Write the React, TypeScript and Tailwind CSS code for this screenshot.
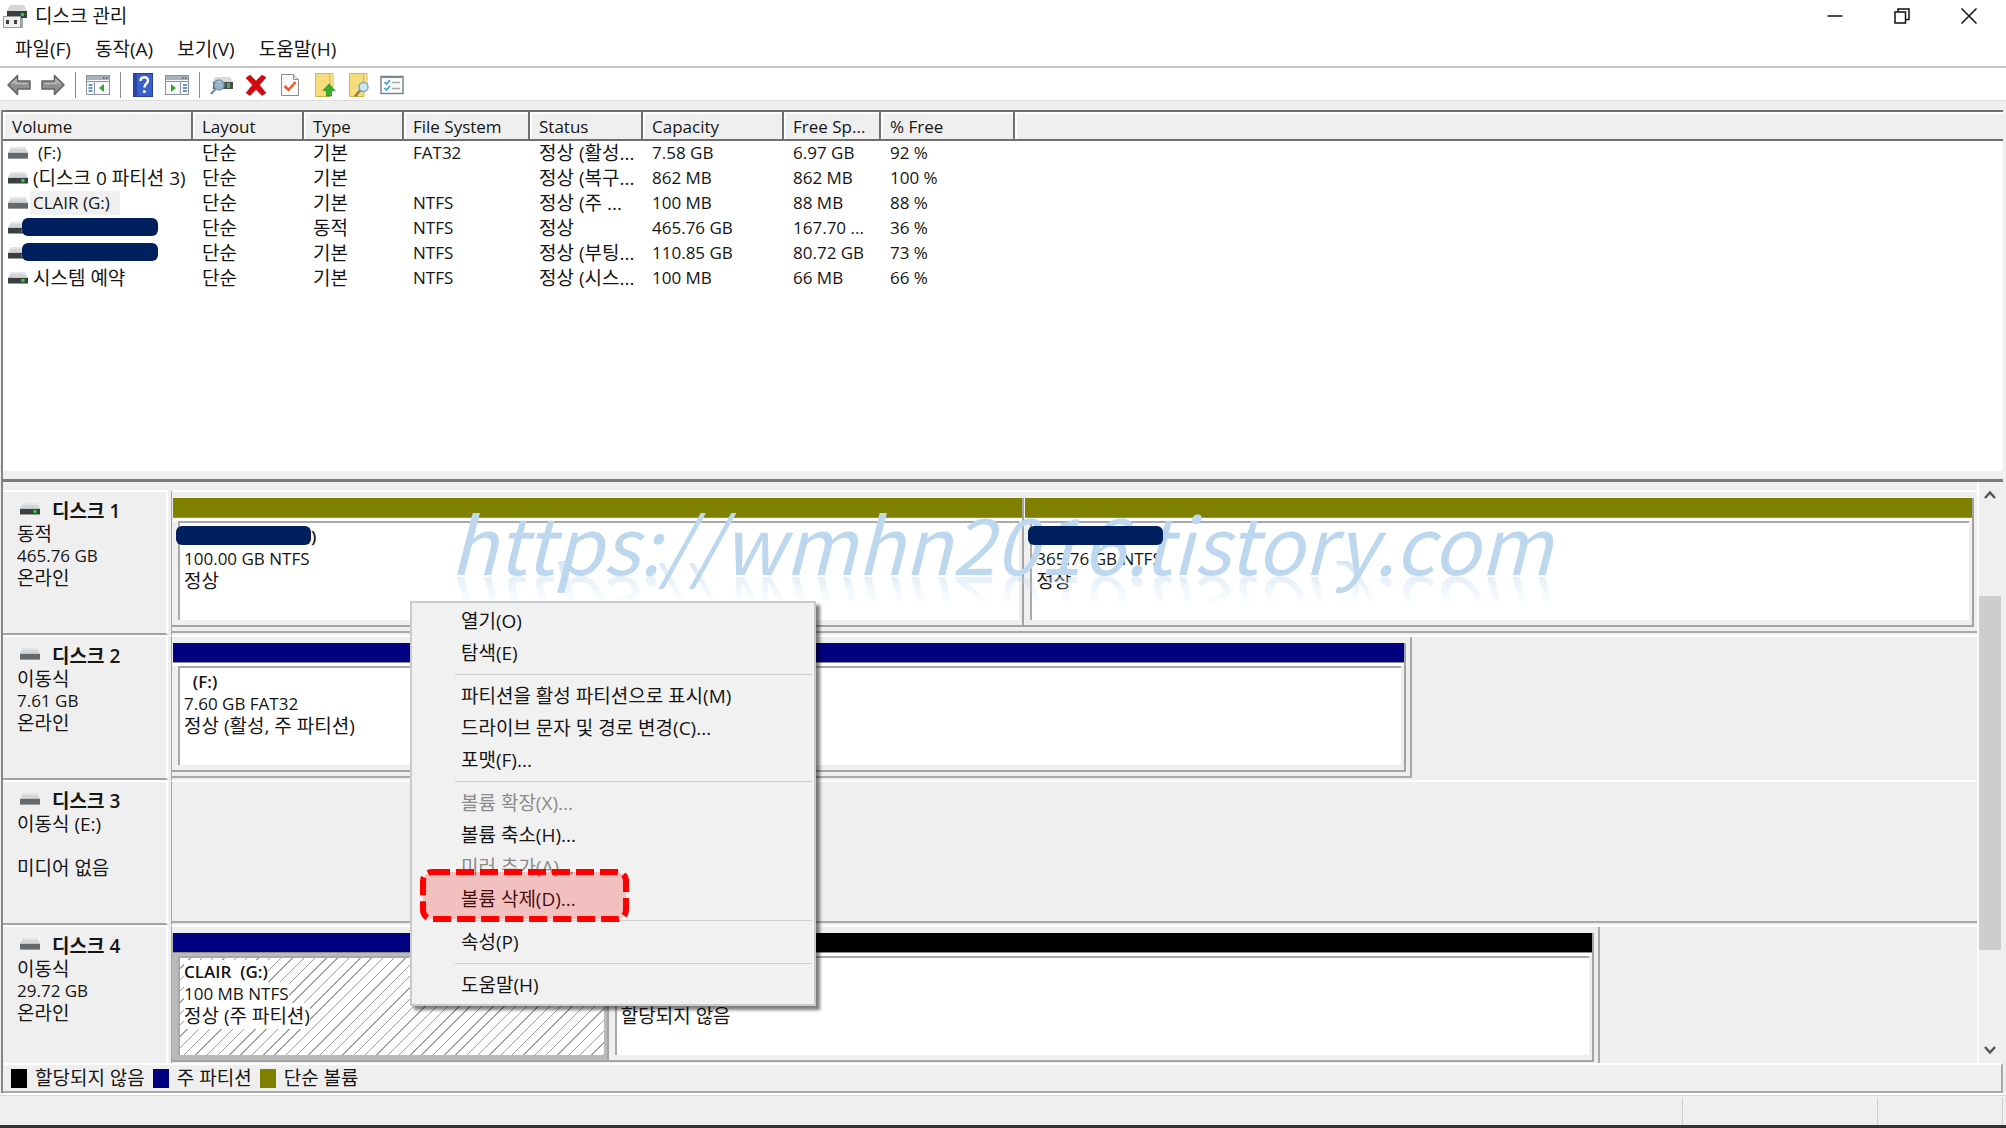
import type { ReactNode } from "react";

type Volume = {
  name?: string;
  masked?: boolean;
  size?: string;
  status: string;
  bar: string;
  grow: number;
  selected?: boolean;
};

type Disk = {
  name: string;
  online?: boolean;
  lines: string[];
  width: string;
  volumes: Volume[];
};

const menus = ["파일(F)", "동작(A)", "보기(V)", "도움말(H)"];

const columns = [
  { title: "Volume", width: "w-[189px]" },
  { title: "Layout", width: "w-[111px]" },
  { title: "Type", width: "w-[100px]" },
  { title: "File System", width: "w-[126px]" },
  { title: "Status", width: "w-[113px]" },
  { title: "Capacity", width: "w-[141px]" },
  { title: "Free Sp...", width: "w-[97px]" },
  { title: "% Free", width: "w-[134px]" },
];

const volumes = [
  { name: "(F:)", indent: true, cells: ["단순", "기본", "FAT32", "정상 (활성...", "7.58 GB", "6.97 GB", "92 %"] },
  { name: "(디스크 0 파티션 3)", online: true, cells: ["단순", "기본", "", "정상 (복구...", "862 MB", "862 MB", "100 %"] },
  { name: "CLAIR (G:)", selected: true, cells: ["단순", "기본", "NTFS", "정상 (주 ...", "100 MB", "88 MB", "88 %"] },
  { name: "", online: true, cells: ["단순", "동적", "NTFS", "정상", "465.76 GB", "167.70 ...", "36 %"] },
  { name: "", online: true, cells: ["단순", "기본", "NTFS", "정상 (부팅...", "110.85 GB", "80.72 GB", "73 %"] },
  { name: "시스템 예약", online: true, cells: ["단순", "기본", "NTFS", "정상 (시스...", "100 MB", "66 MB", "66 %"] },
];

const disks: Disk[] = [
  {
    name: "디스크 1",
    online: true,
    lines: ["동적", "465.76 GB", "온라인"],
    width: "100%",
    volumes: [
      { name: ")", masked: true, size: "100.00 GB NTFS", status: "정상", bar: "bg-[#808000]", grow: 853 },
      { masked: true, size: "365.76 GB NTFS", status: "정상", bar: "bg-[#808000]", grow: 951 },
    ],
  },
  {
    name: "디스크 2",
    lines: ["이동식", "7.61 GB", "온라인"],
    width: "68.7%",
    volumes: [{ name: "  (F:)", size: "7.60 GB FAT32", status: "정상 (활성, 주 파티션)", bar: "bg-[#000080]", grow: 1 }],
  },
  { name: "디스크 3", lines: ["이동식 (E:)", "", "미디어 없음"], width: "100%", volumes: [] },
  {
    name: "디스크 4",
    lines: ["이동식", "29.72 GB", "온라인"],
    width: "79.1%",
    volumes: [
      { name: "CLAIR  (G:)", size: "100 MB NTFS", status: "정상 (주 파티션)", bar: "bg-[#000080]", grow: 436, selected: true },
      { status: "할당되지 않음", bar: "bg-black", grow: 987 },
    ],
  },
];

const contextMenu = [
  [{ label: "열기(O)" }, { label: "탐색(E)" }],
  [{ label: "파티션을 활성 파티션으로 표시(M)" }, { label: "드라이브 문자 및 경로 변경(C)..." }, { label: "포맷(F)..." }],
  [
    { label: "볼륨 확장(X)...", disabled: true },
    { label: "볼륨 축소(H)..." },
    { label: "미러 추가(A)...", disabled: true },
    { label: "볼륨 삭제(D)...", marked: true },
  ],
  [{ label: "속성(P)" }],
  [{ label: "도움말(H)" }],
];

const legend = [
  { label: "할당되지 않음", color: "bg-black" },
  { label: "주 파티션", color: "bg-[#000080]" },
  { label: "단순 볼륨", color: "bg-[#808000]" },
];

// Latin glyphs run wide next to Hangul, so Latin-only strings are set smaller
const textSize = (text: string) => (/[가-힣]/.test(text) ? "text-[19px]" : "text-[17px]");

function DriveIcon({ online }: { online?: boolean }) {
  return (
    <svg width="20" height="12" viewBox="0 0 20 12" className="shrink-0" aria-hidden="true">
      <path d="M3 0h14l3 6H0z" fill="#d3d5d7" />
      <path d="M3 0h14l1 2H2z" fill="#e4e5e6" />
      <rect y="5" width="20" height="1" fill="#c3c5c7" />
      <rect y="6" width="20" height="6" fill={online ? "#3c3f42" : "#66696b"} />
      <rect y="11" width="20" height="1" fill="#9a9c9e" />
      {online && <circle cx="15" cy="8.5" r="1.8" fill="#2fd33a" />}
    </svg>
  );
}

function AppIcon() {
  return (
    <svg width="24" height="24" viewBox="0 0 24 24" aria-hidden="true">
      <path d="M7 1h14l3 6H4z" fill="#d5d7d8" />
      <rect x="4" y="7" width="20" height="7" fill="#3b3e41" />
      <circle cx="19.5" cy="10.5" r="1.8" fill="#2fd33a" />
      <rect x="17" y="14" width="3" height="10" fill="#a7aaac" />
      <rect x="0.5" y="12.5" width="17" height="11" fill="#efefef" stroke="#9b9b9b" />
      <rect x="3" y="16" width="3" height="4" fill="#3f3f3f" />
      <rect x="11" y="16" width="3" height="4" fill="#3f3f3f" />
    </svg>
  );
}

function ArrowIcon({ flip }: { flip?: boolean }) {
  return (
    <svg width="24" height="24" viewBox="0 0 24 24" aria-hidden="true">
      <path
        d={flip ? "M23 12 13.5 2.5v5.5H1v8h12.5v5.5z" : "M1 12 10.5 2.5v5.5H23v8H10.5v5.5z"}
        fill="#8f8f8f"
        stroke="#636363"
        strokeWidth="1.5"
        strokeLinejoin="round"
      />
      <path d={flip ? "M3 10.5h12V7l4 4" : "M21 10.5H9V7l-4 4"} fill="none" stroke="#b9b9b9" strokeWidth="1.5" />
    </svg>
  );
}

function PaneIcon({ right }: { right?: boolean }) {
  return (
    <svg width="24" height="24" viewBox="0 0 24 24" aria-hidden="true">
      <rect x="0.5" y="2.5" width="23" height="19" fill="#f7f8f9" stroke="#8b949e" />
      <rect x="1" y="3" width="22" height="4" fill="#a9b1ba" />
      <path d="M17 5h1.5M20 5h1.5" stroke="#4c5560" strokeWidth="1.5" />
      <path d="M1 8.5h22" stroke="#8b949e" />
      <path d={right ? "M15.5 9v12" : "M8.5 9v12"} stroke="#8b949e" />
      <path d={right ? "M18 12h4M18 15h4M18 18h4" : "M2.5 12h4M2.5 15h4M2.5 18h4"} stroke="#3c78b4" strokeWidth="1.5" />
      <path d={right ? "M6 11l5 4-5 4z" : "M18 11l-5 4 5 4z"} fill="#35a52b" />
    </svg>
  );
}

function HelpIcon() {
  return (
    <svg width="24" height="24" viewBox="0 0 24 24" aria-hidden="true">
      <rect x="2.5" y="0.5" width="19" height="23" fill="#3a5fc8" stroke="#24409c" />
      <rect x="3" y="1" width="3" height="22" fill="#2746a8" />
      <path d="M9.5 8c0-5 7.5-5 7.5-.5 0 3-3.6 3.2-3.6 7" fill="none" stroke="#fff" strokeWidth="2.4" />
      <circle cx="13.4" cy="18.5" r="1.6" fill="#fff" />
    </svg>
  );
}

function DriveSearchIcon() {
  return (
    <svg width="24" height="24" viewBox="0 0 24 24" aria-hidden="true">
      <path d="M5 4h15l3 5H2z" fill="#d8dadb" />
      <rect x="3" y="9" width="20" height="7" fill="#4a4e51" />
      <rect x="17" y="10" width="3" height="5" fill="#2fc53a" />
      <circle cx="9" cy="12" r="5" fill="#a9cbe0" fillOpacity="0.85" stroke="#7796a8" strokeWidth="1.5" />
      <path d="M5.5 16 1 21" stroke="#7796a8" strokeWidth="2.5" />
    </svg>
  );
}

function DeleteIcon() {
  return (
    <svg width="24" height="24" viewBox="0 0 24 24" aria-hidden="true">
      <path d="M2 5 6 2l6 6 6-6 4 2.5-6.5 7.500L22 20l-4 2.500-6-6-6 6L2 20l6.500-8z" fill="#d4080f" stroke="#a9070c" strokeWidth="0.5" />
    </svg>
  );
}

function PropertiesIcon() {
  return (
    <svg width="24" height="24" viewBox="0 0 24 24" aria-hidden="true">
      <path d="M3.5 1.5h12l5 5v16h-17z" fill="#fafafa" stroke="#8c8c8c" />
      <path d="M15.5 1.5v5h5" fill="#e4e4e4" stroke="#8c8c8c" />
      <path d="m6.5 13 4 4 7-8" fill="none" stroke="#ea5a2a" strokeWidth="2.5" />
    </svg>
  );
}

function NoteIcon({ search }: { search?: boolean }) {
  return (
    <svg width="24" height="24" viewBox="0 0 24 24" aria-hidden="true">
      <path d="M3.5.5H18v23H3.5z" fill="#f7dc7c" stroke="#d9b64b" />
      <path d="M18 .5h3v13h-3z" fill="#fbe9a6" stroke="#d9b64b" />
      {search ? (
        <>
          <circle cx="17.5" cy="14" r="4.5" fill="#cfe6f4" stroke="#7fa6bd" strokeWidth="1.5" />
          <path d="m14 17.5-5 6" stroke="#8a8053" strokeWidth="2.5" />
        </>
      ) : (
        <path d="m17 11 6 6.5h-3.5V23h-5v-5.500H11z" fill="#35b22d" stroke="#24871f" strokeWidth="0.7" />
      )}
    </svg>
  );
}

function ChecklistIcon() {
  return (
    <svg width="24" height="24" viewBox="0 0 24 24" aria-hidden="true">
      <rect x="1" y="3.5" width="22" height="17" fill="#fbfbfb" stroke="#7d8791" strokeWidth="1.5" />
      <path d="M1 4h22" stroke="#7d8791" strokeWidth="2" />
      <path d="m4.5 9 2 2 3.500-4M4.500 15l2 2 3.500-4" fill="none" stroke="#3f9be0" strokeWidth="1.7" />
      <path d="M12 9.500h8M12 15.500h8" stroke="#a3a9af" strokeWidth="1.5" />
    </svg>
  );
}

const toolbar: { label: string; icon: ReactNode }[][] = [
  [
    { label: "뒤로", icon: <ArrowIcon /> },
    { label: "앞으로", icon: <ArrowIcon flip /> },
  ],
  [{ label: "콘솔 트리", icon: <PaneIcon /> }],
  [
    { label: "도움말", icon: <HelpIcon /> },
    { label: "작업 창", icon: <PaneIcon right /> },
  ],
  [
    { label: "다시 검사", icon: <DriveSearchIcon /> },
    { label: "삭제", icon: <DeleteIcon /> },
    { label: "속성", icon: <PropertiesIcon /> },
    { label: "열기", icon: <NoteIcon /> },
    { label: "탐색", icon: <NoteIcon search /> },
    { label: "설정", icon: <ChecklistIcon /> },
  ],
];

function TitleBar() {
  return (
    <header className="flex h-8 items-center bg-white pl-[3px] pr-1">
      <AppIcon />
      <h1 className="ml-2 flex-1 text-[19px] leading-6">디스크 관리</h1>
      <button aria-label="최소화" className="flex w-[67px] justify-center">
        <svg width="16" height="16" viewBox="0 0 16 16" stroke="#111" strokeWidth="1.5">
          <path d="M0.5 8h15" />
        </svg>
      </button>
      <button aria-label="이전 크기로" className="flex w-[67px] justify-center">
        <svg width="16" height="16" viewBox="0 0 16 16" fill="none" stroke="#111" strokeWidth="1.5">
          <path d="M1 4h10.5v11H1zM4 4V1h11v10.5h-3.5" />
        </svg>
      </button>
      <button aria-label="닫기" className="flex w-[67px] justify-center">
        <svg width="16" height="16" viewBox="0 0 16 16" stroke="#111" strokeWidth="1.5">
          <path d="m.5.5 15 15m0-15-15 15" />
        </svg>
      </button>
    </header>
  );
}

function Toolbar() {
  return (
    <div className="flex h-[35px] items-center border-t-2 border-b border-t-[#c4c4c4] border-b-[#dcdcdc] bg-white pt-0.5 pl-0.5">
      {toolbar.map((group, i) => (
        <div key={i} className="flex items-center">
          {i > 0 && <span className="mx-[5px] h-[26px] w-px bg-[#8c8c8c]" />}
          {group.map((item) => (
            <button key={item.label} aria-label={item.label} className="flex w-[34px] justify-center">
              {item.icon}
            </button>
          ))}
        </div>
      ))}
    </div>
  );
}

function VolumeTable() {
  return (
    <section className="h-[33vh] shrink-0 border-b-[3px] border-[#7c7c7c] pb-2">
      <div className="h-full overflow-hidden border-t-2 border-[#6f6f6f] bg-white">
        <table className="w-full table-fixed border-collapse text-left">
          <thead>
            <tr className="h-7 border-b-2 border-[#6f6f6f] bg-[#efefef]">
              {columns.map((column) => (
                <th
                  key={column.title}
                  className={`${column.width} border-r-2 border-[#6f6f6f] p-0 pt-0.5 pl-[9px] text-[17px] leading-6 font-normal shadow-[inset_1px_1px_0_1px_#fff]`}
                >
                  {column.title}
                </th>
              ))}
              <th className="p-0 shadow-[inset_1px_1px_0_1px_#fff]" />
            </tr>
          </thead>
          <tbody>
            {volumes.map((volume, i) => (
              <tr key={i} className="h-[25px]">
                <td className="relative p-0 pl-[5px]">
                  <div className="flex items-center gap-0.5 whitespace-nowrap">
                    <DriveIcon online={volume.online} />
                    {volume.name ? (
                      <span
                        className={`leading-6 ${textSize(volume.name)} ${volume.indent ? "pl-2" : "pl-[3px]"} ${volume.selected ? "bg-[#f0f0f0] pr-2.5" : ""}`}
                      >
                        {volume.name}
                      </span>
                    ) : (
                      <span className="absolute top-[3px] left-[19px] h-[18px] w-[136px] rounded-md bg-[#001f5f]" />
                    )}
                  </div>
                </td>
                {volume.cells.map((cell, j) => (
                  <td key={j} className={`p-0 pl-2.5 leading-6 whitespace-nowrap ${textSize(cell)}`}>
                    {cell}
                  </td>
                ))}
                <td />
              </tr>
            ))}
          </tbody>
        </table>
      </div>
    </section>
  );
}

function VolumeBox({ volume }: { volume: Volume }) {
  const label = volume.selected ? "bg-white" : "";
  return (
    <div
      className={`flex min-w-0 basis-0 flex-col border-r-2 border-b-2 border-[#a3a3a3] pl-px ${volume.selected ? "bg-[#bababa]" : "bg-[#efefef]"}`}
      style={{ flexGrow: volume.grow }}
    >
      <div className={`h-5 border-b border-b-[#8c8c8c] ${volume.bar}`} />
      <div className={`h-[3px] ${volume.selected ? "" : "bg-white"}`} />
      <div
        className={`relative mr-[3px] mb-[5px] ml-[5px] flex-1 border-t-2 border-l-2 border-[#a9a9a9] bg-white pt-px pl-1 ${
          volume.selected ? "bg-[repeating-linear-gradient(135deg,#fff_0px,#fff_7px,#a0a0a0_7px,#a0a0a0_8px)]" : ""
        }`}
      >
        {volume.masked && <span className="absolute top-[3px] -left-1 z-20 h-[19px] w-[135px] rounded-md bg-[#001f5f]" />}
        <p className="h-[22px] pt-0.5 text-[17px] leading-[22px] font-semibold whitespace-pre">
          <span className={`${label} ${volume.masked ? "pl-[127px]" : ""}`}>{volume.name}</span>
        </p>
        <p className="h-[22px] pt-0.5 text-[17px] leading-[22px]">
          <span className={label}>{volume.size}</span>
        </p>
        <p className="h-[22px] pt-0.5 text-[19px] leading-[22px]">
          <span className={label}>{volume.status}</span>
        </p>
      </div>
    </div>
  );
}

function DiskRow({ disk }: { disk: Disk }) {
  return (
    <div className="flex h-[145px] shrink-0">
      <div className="mr-[3px] w-[165px] shrink-0 border-t-2 border-r-2 border-b-2 border-t-white border-r-white border-b-[#a3a3a3] pt-2 pl-3.5">
        <h2 className="flex h-[22px] items-center text-[19px] font-semibold">
          <span className="mr-3 mb-1 ml-[3px]">
            <DriveIcon online={disk.online} />
          </span>
          {disk.name}
        </h2>
        {disk.lines.map((line, i) => (
          <p key={i} className={`h-[22px] pt-px leading-[22px] ${textSize(line)}`}>
            {line}
          </p>
        ))}
      </div>
      <div className="min-w-0 flex-1 border-t-2 border-l border-t-white border-l-[#a3a3a3] pb-0.5">
        <div
          className={`flex h-full border-b-2 border-[#a9a9a9] pt-1.5 pb-1 ${disk.width === "100%" ? "pr-[3px]" : "border-r-2 pr-1"}`}
          style={{ width: disk.width }}
        >
          {disk.volumes.map((volume, i) => (
            <VolumeBox key={i} volume={volume} />
          ))}
        </div>
      </div>
    </div>
  );
}

function ScrollBar() {
  return (
    <div className="flex w-[26px] shrink-0 flex-col items-center border-l-2 border-white pr-0.5">
      <button aria-label="위로" className="flex h-[26px] items-center">
        <svg width="12" height="10" viewBox="0 0 12 10" fill="none" stroke="#555" strokeWidth="2.5">
          <path d="m1 8 5-5.5L11 8" />
        </svg>
      </button>
      <div className="flex w-full flex-1 flex-col">
        <div className="grow-[88]" />
        <div className="grow-[354] bg-[#cdcdcd]" />
        <div className="grow-[87]" />
      </div>
      <button aria-label="아래로" className="flex h-[26px] items-center">
        <svg width="12" height="10" viewBox="0 0 12 10" fill="none" stroke="#555" strokeWidth="2.5">
          <path d="m1 2 5 5.5L11 2" />
        </svg>
      </button>
    </div>
  );
}

function ContextMenu() {
  return (
    <div
      role="menu"
      className="absolute top-[601px] left-[410px] z-30 w-[406px] border-2 border-[#cacaca] bg-[#f1f1f1] pt-0.5 pb-[3px] shadow-[4px_4px_3px_rgba(0,0,0,0.5)]"
    >
      {contextMenu.map((group, i) => (
        <div key={i}>
          {i > 0 && <div className="my-[5px] mr-0.5 ml-[43px] h-px bg-[#cfcfcf]" />}
          {group.map((item) => (
            <div key={item.label} className="relative">
              <button
                role="menuitem"
                disabled={"disabled" in item}
                className="block h-8 w-full pl-[49px] text-left text-[19px] leading-8 disabled:text-[#8a8a8a]"
              >
                {item.label}
              </button>
              {"marked" in item && (
                <svg width="210" height="54" viewBox="0 0 210 54" className="absolute -top-3.5 left-2 z-10" aria-hidden="true">
                  <rect x="3" y="3" width="203" height="47" rx="9" fill="rgba(255,0,0,0.2)" stroke="#fe0000" strokeWidth="6" strokeDasharray="18 6" />
                </svg>
              )}
            </div>
          ))}
        </div>
      ))}
    </div>
  );
}

export default function App() {
  return (
    <div className="relative flex h-screen min-h-[900px] flex-col overflow-hidden bg-[#efefef] font-['Open_Sans','Noto_Sans_CJK_KR',sans-serif] text-[#151515]">
      <TitleBar />
      <nav className="flex h-[34px] items-center bg-white pl-[3px]">
        {menus.map((menu) => (
          <button key={menu} className="px-3 text-[19px] leading-6">
            {menu}
          </button>
        ))}
      </nav>
      <Toolbar />

      <main className="mt-[9px] mr-[3px] ml-px flex min-h-0 flex-1 flex-col border-l-2 border-[#858585]">
        <VolumeTable />
        <section className="flex min-h-0 flex-1">
          <div className="min-w-0 flex-1 overflow-hidden pt-2">
            {disks.map((disk) => (
              <DiskRow key={disk.name} disk={disk} />
            ))}
          </div>
          <ScrollBar />
        </section>
        <ul className="flex h-[30px] items-center gap-2 border-t-2 border-r-2 border-b-2 border-t-white border-r-[#a9a9a9] border-b-[#a9a9a9] pl-2">
          {legend.map((item) => (
            <li key={item.label} className="flex items-center gap-2">
              <span className={`h-[19px] w-4 ${item.color}`} />
              <span className="text-[19px] leading-6">{item.label}</span>
            </li>
          ))}
        </ul>
      </main>

      <footer className="flex h-[35px] flex-col border-t-2 border-white">
        <div className="flex flex-1 border-t border-[#d7d7d7] pt-0.5 pr-[3px]">
          <div className="flex-1" />
          <div className="w-[195px] border-l border-[#cfcfcf]" />
          <div className="w-[126px] border-x border-[#cfcfcf]" />
        </div>
        <div className="h-[3px] bg-[#303334]" />
      </footer>

      <div className="pointer-events-none absolute top-[491px] left-[450px] z-10 font-['Noto_Sans_CJK_KR',sans-serif] text-[78px] leading-[100px] whitespace-nowrap text-[#bdd7ee] italic [-webkit-box-reflect:below_-30px_linear-gradient(transparent_55%,rgba(0,0,0,0.6))]">
        https://wmhn2016.tistory.com
      </div>
      <ContextMenu />
    </div>
  );
}
